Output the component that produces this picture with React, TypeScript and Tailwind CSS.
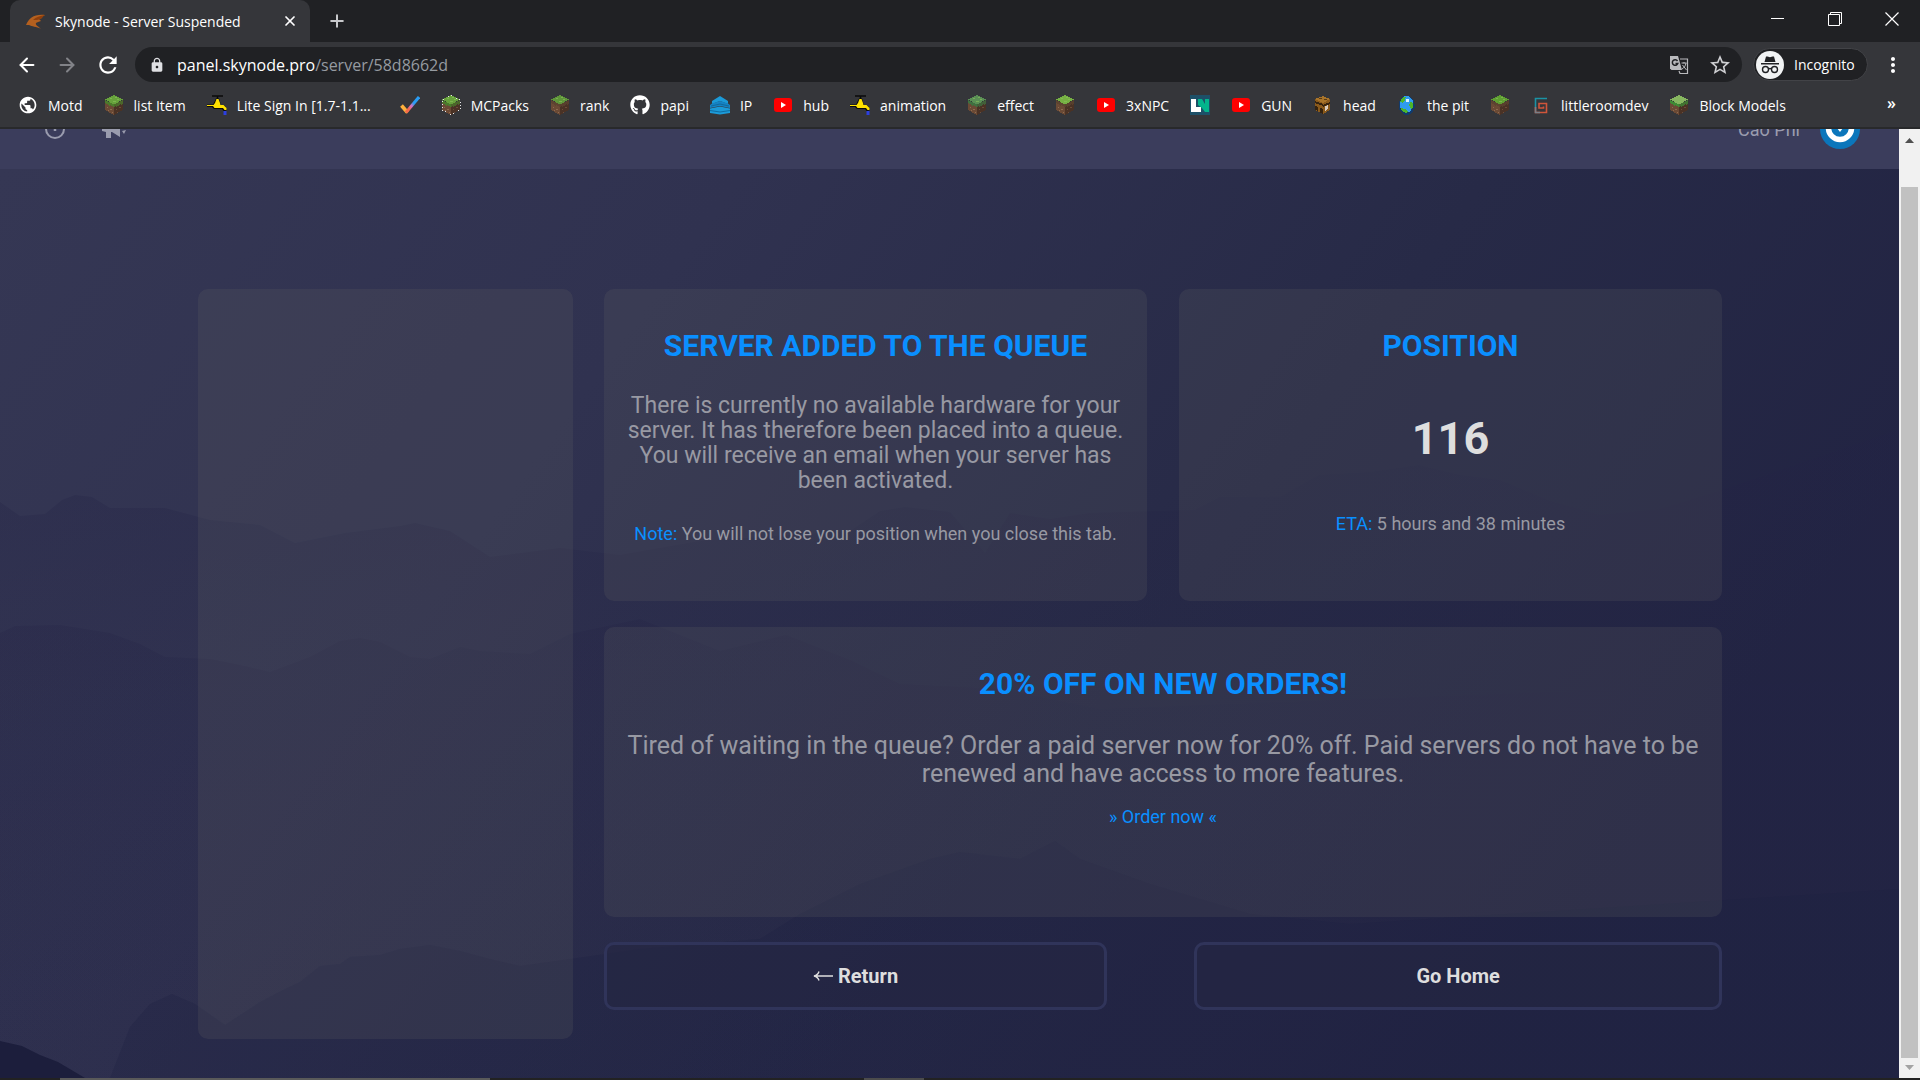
import React from "react";
import { FaGithub } from "react-icons/fa";
import { MdRefresh, MdLock, MdStarBorder, MdMoreVert, MdPublic } from "react-icons/md";
import { ArrowLeft, ArrowRight, Plus, X } from "lucide-react";

function GrassBlock({ top = "#67a23c", edge = "#4c7a2c", outlined = false }: { top?: string; edge?: string; outlined?: boolean }) {
  return (
    <svg viewBox="0 0 20 20" className="size-5 shrink-0" shapeRendering="crispEdges" aria-hidden="true">
      <path d="M1 5 10 9.500V20L1 15Z" fill="#6b4a35" />
      <path d="M19 5 10 9.500V20L19 15Z" fill="#4a3225" />
      <path d="M1 5 10 9.500V12L8 11V12L6 10V11L3 9V10L1 8Z" fill={edge} />
      <path d="M19 5 10 9.500V12L12 11V12L14 10V11L17 9V10L19 8Z" fill={edge} opacity=".75" />
      <path d="M10 0 19 4.500 10 9.500 1 4.500Z" fill={top} />
      <path d="M6 3h2v1H6zM11 2h2v1h-2zM9 6h3v1H9zM13 4h2v1h-2z" fill="#8cc35c" opacity=".6" />
      <path d="M3 12h1v1H3zM6 14h2v1H6zM4 15h1v1H4zM8 17h1v1H8z" fill="#8f6b50" />
      <path d="M12 14h1v1h-1zM15 12h2v1h-2zM13 17h1v1h-1z" fill="#6d4c38" />
      {outlined && <path d="M10 .5 19 5V15L10 19.500 1 15V5Z" fill="none" stroke="#e8e8e8" strokeWidth="1" strokeDasharray="1 2" />}
    </svg>
  );
}

function Faucet() {
  return (
    <svg viewBox="0 0 20 20" className="size-5 shrink-0" aria-hidden="true">
      <path d="M5 1h11M10.500 1v3" stroke="#0a0a0a" strokeWidth="1.500" />
      <path d="M0 9.500h6l3-6h3l2 6.500 4 1 2 4-3 1.500-2-2.500H7l-2-2H0Z" fill="#0a0a0a" />
      <path d="M0 10h6.500l1.500-2 1.500-4h2l1.500 4 .5 2h3l3 3v2h-2l-1.500-2H7.500L6 11H0Z" fill="#ffe100" />
      <path d="M16.500 16h3v4h-3z" fill="#2b3fe0" />
    </svg>
  );
}

function ColorCheck() {
  return (
    <svg viewBox="0 0 20 20" className="size-5 shrink-0" aria-hidden="true">
      <defs>
        <linearGradient id="chk" x1="0" y1="1" x2="1" y2="0">
          <stop offset=".2" stopColor="#f4694a" />
          <stop offset=".42" stopColor="#d76fc0" />
          <stop offset=".6" stopColor="#2a9df4" />
        </linearGradient>
      </defs>
      <path d="M1.500 10.500 7.500 17.500" stroke="#ffb13c" strokeWidth="3.600" />
      <path d="M6 17.500 19 2" stroke="url(#chk)" strokeWidth="3" />
    </svg>
  );
}

function Layers() {
  return (
    <svg viewBox="0 0 20 20" className="size-5 shrink-0" aria-hidden="true">
      <path d="M10 1 18 6v3l-8-3-8 3V6Z" fill="#1b9ad8" />
      <path d="M2 8.500 10 6l8 2.500 2 1.500v3l-10-2-10 2v-3Z" fill="#1583c4" />
      <path d="M0 13.500l10-2 10 2V18l-10 1.500L0 18Z" fill="#1b9ad8" />
      <path d="M0 15.500l10 1.500 10-1.500M1 11l9-2 9 2" stroke="#0f6a9f" fill="none" />
    </svg>
  );
}

function YouTube() {
  return (
    <svg viewBox="0 0 20 20" className="size-5 shrink-0" aria-hidden="true">
      <rect x="1" y="3" width="18" height="14" rx="3" fill="#f00" />
      <path d="M8 7v6l5-3Z" fill="#fff" />
    </svg>
  );
}

function LogoLN() {
  return (
    <svg viewBox="0 0 20 20" className="size-5 shrink-0" aria-hidden="true">
      <path d="M0 0h20v20H0z" fill="#1d5068" />
      <path d="M1 4h5v8h5v5H1z" fill="#fff" />
      <path d="M8 4h4l3 5V4h4v13h-4l-3-4-4-3Z" fill="#04b48c" />
    </svg>
  );
}

function HeadCube() {
  return (
    <svg viewBox="0 0 20 20" className="size-5 shrink-0" shapeRendering="crispEdges" aria-hidden="true">
      <path d="M10 1 17 4v11l-7 4-8-4V4Z" fill="#8a5a1c" />
      <path d="M10 1 17 4l-7 4-8-4Z" fill="#a8742a" />
      <path d="M2 6l8 3v2L2 8zM10 10l7-3v2l-7 3zM2 11l3 1v4l-3-1zM7 13l3 1v5l-3-1z" fill="#35230f" />
      <path d="M12 11l3-1v4l-3 2Z" fill="#d8ccc0" />
      <path d="M6 3h3v1H6zM11 4h3v1h-3z" fill="#5b3a12" />
    </svg>
  );
}

function PixelGlobe() {
  return (
    <svg viewBox="0 0 20 20" className="size-5 shrink-0" shapeRendering="crispEdges" aria-hidden="true">
      <path d="M6 1h7l4 5 1 6-3 6-4 2H7l-5-5V7Z" fill="#123a6a" />
      <path d="M7 1h5l4 5v6l-3 5H7l-4-4V7Z" fill="#2f9bf0" />
      <path d="M6 2h3l-1 3-2 3-3-1zM14 6l2 3v4l-2 1-2-4zM4 13l4 1 3 3-2 1-4-2z" fill="#4cb52b" />
      <path d="M9 4h3v3H9z" fill="#d8f2ff" />
    </svg>
  );
}

function SwirlG() {
  return (
    <svg viewBox="0 0 20 20" className="size-5 shrink-0" fill="none" strokeWidth="1.600" aria-hidden="true">
      <path d="M16 3.500H4.500V12" stroke="#1b93a5" />
      <path d="M4.500 12v5.500H15.500V8.500H8V13h4.500v-1.500" stroke="#d0553a" />
      <path d="M4.500 12v5.500H9" stroke="#7a7f86" />
    </svg>
  );
}

function SkynodeMark() {
  return (
    <svg viewBox="0 0 20 20" className="size-5 shrink-0" aria-hidden="true">
      <path d="M0 14C3 7 8 3 19 4c-2 1-3 2-3 3l-3 1 2 2c-2 1-4 1-5 2-1 2 2 3 5 6-5-3-9-2-12-4L0 14Z" fill="#b4601f" />
      <path d="M7 9c3-3 7-4 12-5-3 2-3 3-4 4-3 1-5 1-8 1Z" fill="#8f3f0c" />
    </svg>
  );
}

const bookmarks: { icon: React.ReactNode; label?: string; name: string; long?: boolean }[] = [
  { icon: <MdPublic className="size-5 shrink-0 text-white" />, label: "Motd", name: "Motd" },
  { icon: <GrassBlock />, label: "list Item", name: "list Item" },
  { icon: <Faucet />, label: "Lite Sign In [1.7-1.1...", name: "Lite Sign In", long: true },
  { icon: <ColorCheck />, name: "Tasks" },
  { icon: <GrassBlock outlined />, label: "MCPacks", name: "MCPacks" },
  { icon: <GrassBlock top="#5f963a" edge="#5d4430" />, label: "rank", name: "rank" },
  { icon: <FaGithub className="size-5 shrink-0 text-white" />, label: "papi", name: "papi" },
  { icon: <Layers />, label: "IP", name: "IP" },
  { icon: <YouTube />, label: "hub", name: "hub" },
  { icon: <Faucet />, label: "animation", name: "animation" },
  { icon: <GrassBlock top="#5a8f55" edge="#3f7040" />, label: "effect", name: "effect" },
  { icon: <GrassBlock top="#76b043" edge="#5d4430" />, name: "Block" },
  { icon: <YouTube />, label: "3xNPC", name: "3xNPC" },
  { icon: <LogoLN />, name: "LN" },
  { icon: <YouTube />, label: "GUN", name: "GUN" },
  { icon: <HeadCube />, label: "head", name: "head" },
  { icon: <PixelGlobe />, label: "the pit", name: "the pit" },
  { icon: <GrassBlock top="#5fa032" edge="#5d4430" />, name: "Grass" },
  { icon: <SwirlG />, label: "littleroomdev", name: "littleroomdev" },
  { icon: <GrassBlock top="#86b560" edge="#3f8a35" />, label: "Block Models", name: "Block Models" },
];

function TabStrip() {
  return (
    <div className="flex h-[42px] items-stretch bg-[#202124]">
      <div className="ml-[10px] flex w-[300px] items-center rounded-t-[10px] bg-[#35363a] pr-3 pl-4">
        <SkynodeMark />
        <span className="ml-[9px] flex-1 truncate text-[14px] text-white">Skynode - Server Suspended</span>
        <button aria-label="Close tab" className="text-white">
          <X className="size-4" strokeWidth={2.6} />
        </button>
      </div>
      <button aria-label="New tab" className="ml-[17px] text-[#c8c9cc]">
        <Plus className="size-5" strokeWidth={2.4} />
      </button>
      <div className="ml-auto flex items-center pb-[5px] text-white">
        <button aria-label="Minimize" className="flex w-[57px] justify-center">
          <svg viewBox="0 0 14 14" className="size-[14px]"><path d="M0 6.500h13" stroke="currentColor" /></svg>
        </button>
        <button aria-label="Restore" className="flex w-[57px] justify-center">
          <svg viewBox="0 0 14 14" className="size-[14px]" fill="none" stroke="currentColor"><path d="M.5 2.500h11v11H.5zM2.500 2.500V.5h11v11h-2" /></svg>
        </button>
        <button aria-label="Close window" className="flex w-[57px] justify-center">
          <svg viewBox="0 0 14 14" className="size-[14px]"><path d="M.5.5l13 13M13.500.5l-13 13" stroke="currentColor" strokeWidth="1.200" /></svg>
        </button>
      </div>
    </div>
  );
}

function Toolbar() {
  return (
    <div className="flex h-[45px] items-center bg-[#35363a] text-white">
      <button aria-label="Back" className="ml-4"><ArrowLeft className="size-[22px]" strokeWidth={2.2} /></button>
      <button aria-label="Forward" className="ml-[18px] text-[#828388]"><ArrowRight className="size-[22px]" strokeWidth={2.2} /></button>
      <button aria-label="Reload" className="ml-[17px]"><MdRefresh className="size-[26px]" /></button>
      <div className="ml-[14px] flex h-[35px] flex-1 items-center rounded-full bg-[#202124] pr-[10px] pl-[14px]">
        <MdLock className="size-4 text-[#dfe0e3]" />
        <span className="ml-3 flex-1 text-[16px] text-white">
          panel.skynode.pro<span className="text-[#969ba1]">/server/58d8662d</span>
        </span>
        <button aria-label="Translate this page">
          <svg viewBox="0 0 20 20" className="size-5" fill="none" aria-hidden="true">
            <path d="M1 1h8l4 14H2.500L1 13.500Z" fill="#b9babd" />
            <path d="M8.500 6A2.800 2.800 0 1 0 8.800 8.500H6.500" stroke="#202124" strokeWidth="1.500" />
            <path d="M11 4h7.500v14.500H11L10 16" stroke="#b9babd" strokeWidth="1.200" />
            <path d="M12.500 8h5M15 7v1.500M17 8c-.5 3-2 5-4 6M13.500 10l4 5" stroke="#b9babd" />
          </svg>
        </button>
        <button aria-label="Bookmark this page" className="ml-[19px] text-[#cfd0d3]"><MdStarBorder className="size-6" /></button>
      </div>
      <button className="ml-[11px] flex h-[33px] w-[115px] items-center rounded-full border border-[#424347] bg-[#202124] pl-[2px] text-[14px]">
        <svg viewBox="0 0 28 28" className="size-7 shrink-0" aria-hidden="true">
          <circle cx="14" cy="14" r="14" fill="#f1f3f4" />
          <path d="M10 5.500h1.500l2.500.8 2.500-.8H18l1.500 5.500h-11ZM5 12h18v1.500H5Z" fill="#202124" />
          <g fill="none" stroke="#202124" strokeWidth="1.400">
            <circle cx="9.500" cy="18.500" r="3" />
            <circle cx="18.500" cy="18.500" r="3" />
            <path d="M12.500 18q1.500-1 3 0" />
          </g>
        </svg>
        <span className="ml-[10px]">Incognito</span>
      </button>
      <button aria-label="Menu" className="mr-[15px] ml-[13px]"><MdMoreVert className="size-6" /></button>
    </div>
  );
}

function BookmarksBar() {
  return (
    <nav aria-label="Bookmarks" className="flex h-[42px] items-center gap-[21px] border-b-2 border-[#28292b] bg-[#35363a] pb-1 pl-[18px] text-[14px] text-white">
      {bookmarks.map((b) => (
        <a key={b.name} href="#" aria-label={b.name} className="flex items-center gap-[10px] whitespace-nowrap">
          {b.icon}
          {b.label && <span className={b.long ? "w-[142px]" : ""}>{b.label}</span>}
        </a>
      ))}
      <button aria-label="More bookmarks" className="mr-[24px] ml-auto pb-1 text-[16px] font-semibold">»</button>
    </nav>
  );
}

function PageHeader() {
  return (
    <header className="flex h-10 flex-col justify-end overflow-hidden bg-[#3b3d5c]">
      <div className="flex h-20 shrink-0 items-center pr-[39px] pl-[45px] font-['Roboto',sans-serif] text-[18px] text-[#9a9cae]">
        <button aria-label="Activity">
          <svg viewBox="0 0 20 20" className="size-5" fill="none" stroke="currentColor" strokeWidth="2" aria-hidden="true">
            <circle cx="10" cy="10" r="9" />
            <path d="M10 4v8" strokeWidth="2.500" />
          </svg>
        </button>
        <button aria-label="Announcements" className="ml-[37px]">
          <svg viewBox="0 0 24 20" className="h-5 w-6" fill="currentColor" aria-hidden="true">
            <path d="M0 5h9l9-5v18l-8-5H9v6H4v-6L0 12ZM20 12l4-1-2 4zM19 7h5v2h-5z" />
          </svg>
        </button>
        <span className="ml-auto">Cao Phi</span>
        <svg viewBox="0 0 40 40" className="ml-5 size-10" aria-hidden="true">
          <circle cx="20" cy="20" r="20" fill="#0b76bb" />
          <circle cx="20" cy="19" r="11.500" fill="none" stroke="#fff" strokeWidth="5.500" />
          <path d="M17 19h6l-3 4z" fill="#fff" />
        </svg>
      </div>
    </header>
  );
}

function Mountains() {
  return (
    <svg viewBox="0 0 1899 909" preserveAspectRatio="none" className="absolute inset-0 size-full" aria-hidden="true">
      <defs>
        <linearGradient id="sky" x1="0" y1="0" x2="1" y2=".35">
          <stop offset="0" stopColor="#353754" />
          <stop offset=".35" stopColor="#303250" />
          <stop offset=".7" stopColor="#272a47" />
          <stop offset="1" stopColor="#222443" />
        </linearGradient>
        <linearGradient id="far" x1="0" y1="0" x2="0" y2="1">
          <stop offset="0" stopColor="#232345" stopOpacity=".35" />
          <stop offset=".4" stopColor="#232345" stopOpacity=".1" />
          <stop offset="1" stopColor="#232345" stopOpacity=".1" />
        </linearGradient>
        <linearGradient id="mid" x1="0" y1="0" x2="0" y2="1">
          <stop offset="0" stopColor="#232345" stopOpacity=".25" />
          <stop offset="1" stopColor="#232345" stopOpacity=".08" />
        </linearGradient>
      </defs>
      <path d="M0 0h1899v909H0z" fill="url(#sky)" />
      <path d="M0 333 20 347 45 345 62 331 75 326 92 328 110 339 165 339 210 351 260 356 295 374 345 364 400 357 415 354 450 362 490 388 560 379 620 386 700 372 850 362 880 342 905 338 950 343 985 384 1010 344 1050 350 1090 344 1195 341 1220 328 1280 328 1319 306 1370 303 1419 296 1460 306 1500 311 1550 332 1600 346 1660 340 1722 321 1899 260V909H0Z" fill="url(#far)" />
      <path d="M0 464 15 457 60 456 110 464 140 475 165 488 210 490 240 496 270 503 310 488 340 472 360 469 380 473 410 488 430 490 460 478 480 482 530 485 570 465 640 450 720 482 786 466 850 491 900 515 1000 520 1100 540 1899 510V909H0Z" fill="url(#mid)" />
      <path d="M110 909 130 858 150 835 172 825 195 835 225 856 260 833 285 820 300 813 320 797 340 795 350 788 380 786 400 780 430 776 460 782 490 790 520 797 570 790 640 780 760 770 800 745 860 715 930 690 960 683 1020 690 1055 672 1080 690 1150 715 1250 745 1350 755 1899 720V909Z" fill="#1f2143" fillOpacity=".3" />
      <path d="M0 872 22 877 40 886 58 893 85 909H0Z" fill="#1c1e3c" />
    </svg>
  );
}

function Card({ className = "", children }: { className?: string; children?: React.ReactNode }) {
  return (
    <section className={`rounded-[10px] bg-[rgba(100,100,102,0.2)] px-5 pt-[39px] text-center ${className}`}>{children}</section>
  );
}

function Title({ children }: { children: React.ReactNode }) {
  return <h2 className="text-[30px] leading-9 font-bold text-[#0a8fff]">{children}</h2>;
}

function ServerPage() {
  return (
    <main className="relative flex-1 font-['Roboto',sans-serif] text-[#9899a3]">
      <Mountains />
      <div className="relative grid grid-cols-[375px_1fr] items-start gap-[31px] pt-[120px] pr-[177px] pb-[39px] pl-[198px]">
        <Card className="min-h-[750px]" />
        <div className="flex flex-col">
          <div className="grid grid-cols-2 gap-8">
            <Card className="pb-[56px]">
              <Title>SERVER ADDED TO THE QUEUE</Title>
              <p className="mt-[29px] text-[23px] leading-[25px]">
                There is currently no available hardware for your server. It has therefore been placed into a queue. You will receive an email when your server has been activated.
              </p>
              <p className="mt-[30px] text-[18px] leading-[22px]">
                <span className="text-[#0a8fff]">Note:</span> You will not lose your position when you close this tab.
              </p>
            </Card>
            <Card>
              <Title>POSITION</Title>
              <p className="mt-[51px] text-[45px] leading-[48px] font-bold text-[#dedede]">116</p>
              <p className="mt-[50px] text-[18px] leading-[22px]">
                <span className="text-[#0a8fff]">ETA:</span> 5 hours and 38 minutes
              </p>
            </Card>
          </div>
          <Card className="mt-[26px] pb-[89px]">
            <Title>20% OFF ON NEW ORDERS!</Title>
            <p className="mt-[30px] text-[25px] leading-[28px]">
              Tired of waiting in the queue? Order a paid server now for 20% off. Paid servers do not have to be renewed and have access to more features.
            </p>
            <a href="#" className="mt-[18px] block text-[18px] leading-[22px] text-[#0a8fff]">» Order now «</a>
          </Card>
          <div className="mt-[25px] flex justify-between text-[20px] font-bold text-[#dedede]">
            <button className="flex h-[68px] w-[45%] items-center justify-center gap-[5px] rounded-[10px] border-[3px] border-[#30345a] bg-[#242743]/60">
              <svg viewBox="0 0 20 12" className="h-3 w-5" fill="none" stroke="currentColor" strokeWidth="1.400" aria-hidden="true">
                <path d="M20 6H1.500M6 1.500Q5 5 1 6q4 1 5 4.500" />
              </svg>
              Return
            </button>
            <button className="h-[68px] w-[47.2%] rounded-[10px] border-[3px] border-[#30345a] bg-[#242743]/60">Go Home</button>
          </div>
        </div>
      </div>
    </main>
  );
}

function Scrollbar() {
  return (
    <div className="flex w-[21px] flex-col bg-[#f1f1f1] px-[2px]" aria-hidden="true">
      <svg viewBox="0 0 17 21" className="h-[21px] w-[17px]"><path d="M4 14h9L8.500 9z" fill="#505050" /></svg>
      <div className="mt-[37px] flex-1 bg-[#c1c1c1]" />
      <svg viewBox="0 0 17 20" className="h-5 w-[17px]"><path d="M4 7h9L8.500 12z" fill="#a3a3a3" /></svg>
    </div>
  );
}

export default function App() {
  return (
    <div className="flex min-h-screen flex-col bg-[#202124] font-['Open_Sans','Noto_Sans',sans-serif]">
      <TabStrip />
      <Toolbar />
      <BookmarksBar />
      <div className="flex flex-1">
        <div className="flex flex-1 flex-col">
          <PageHeader />
          <ServerPage />
        </div>
        <Scrollbar />
      </div>
      <div className="flex h-[2px] bg-[#222]" aria-hidden="true">
        <div className="ml-[60px] w-[430px] bg-[#5a5a5a]" />
        <div className="ml-[374px] w-[60px] bg-[#4c4c4c]" />
      </div>
    </div>
  );
}
